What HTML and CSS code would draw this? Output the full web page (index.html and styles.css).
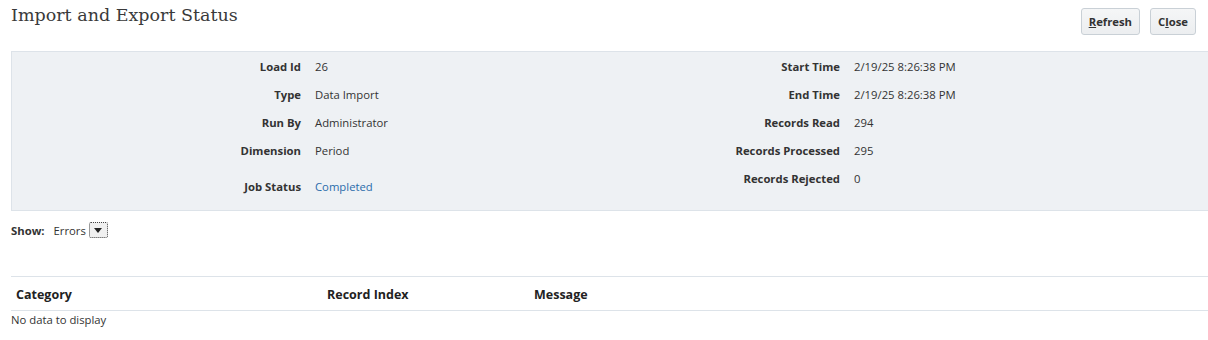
FILE: index.html
```html
<!DOCTYPE html>
<html lang="en">
<head>
    <meta charset="UTF-8">
    <title>Import and Export Status</title>
    <link rel="stylesheet" href="styles.css">
</head>
<body>
    <div class="page-header">
        <h1 class="page-title">Import and Export Status</h1>
        <div class="toolbar">
            <button class="btn"><u>R</u>efresh</button>
            <button class="btn">C<u>l</u>ose</button>
        </div>
    </div>

    <div class="summary">
        <div class="form-grid">
            <div class="label">Load Id</div>
            <div class="value">26</div>
            <div class="label">Start Time</div>
            <div class="value">2/19/25 8:26:38 PM</div>

            <div class="label">Type</div>
            <div class="value">Data Import</div>
            <div class="label">End Time</div>
            <div class="value">2/19/25 8:26:38 PM</div>

            <div class="label">Run By</div>
            <div class="value">Administrator</div>
            <div class="label">Records Read</div>
            <div class="value">294</div>

            <div class="label">Dimension</div>
            <div class="value">Period</div>
            <div class="label">Records Processed</div>
            <div class="value">295</div>

            <div class="label status-label">Job Status</div>
            <div class="value status-value"><a href="#" class="link">Completed</a></div>
            <div class="label">Records Rejected</div>
            <div class="value">0</div>
        </div>
    </div>

    <div class="filter">
        <span class="filter-label">Show:</span>
        <span class="filter-value">Errors</span>
        <span class="drop-btn">
            <svg width="8" height="5" viewBox="0 0 8 5"><path d="M0 0h8L4 5z" fill="#222"/></svg>
        </span>
    </div>

    <table class="results">
        <thead>
            <tr>
                <th class="col-cat">Category</th>
                <th class="col-idx">Record Index</th>
                <th>Message</th>
            </tr>
        </thead>
        <tbody>
            <tr>
                <td colspan="3" class="empty">No data to display</td>
            </tr>
        </tbody>
    </table>
</body>
</html>
```

FILE: styles.css
```css
* {
    margin: 0;
    padding: 0;
    box-sizing: border-box;
}

body {
    font-family: "Segoe UI", "Open Sans", sans-serif;
    font-size: 11.3px;
    color: #333;
    background: white;
    padding: 0 0 0 11px;
}

.page-header {
    display: flex;
    justify-content: space-between;
    align-items: flex-start;
    height: 51px;
}

.page-title {
    font-family: "DejaVu Serif", "Liberation Serif", serif;
    font-weight: normal;
    font-size: 17.5px;
    color: #3a3a3a;
    margin-top: 5px;
}

.toolbar {
    display: flex;
    gap: 10px;
    margin-top: 8px;
    margin-right: 12px;
}

.btn {
    font-family: "Segoe UI", "Open Sans", sans-serif;
    font-size: 11.3px;
    font-weight: bold;
    color: #333;
    background: linear-gradient(#f5f6f7, #eceef0);
    border: 1px solid #c9d0d6;
    border-radius: 3px;
    height: 27px;
    padding: 0 7px;
}

.summary {
    background: #eef1f4;
    border: 1px solid #dde3e9;
    border-right: none;
    height: 160px;
}

.form-grid {
    display: grid;
    grid-template-columns: 303px 239px 300px 1fr;
    grid-auto-rows: 28px;
    align-items: center;
}

.label {
    text-align: right;
    font-weight: bold;
    padding-right: 14px;
}

.value {
    white-space: nowrap;
}

.status-label,
.status-value {
    padding-top: 16px;
}

.link {
    color: #2a6cab;
    text-decoration: none;
}

.filter {
    display: flex;
    align-items: center;
    height: 38px;
}

.filter-label {
    font-weight: bold;
    margin-right: 9px;
}

.drop-btn {
    display: inline-flex;
    align-items: center;
    justify-content: center;
    width: 19px;
    height: 16px;
    margin-left: 3px;
    border: 1px dotted #444;
    border-radius: 2px;
    background: #f0f0f0;
}

.results {
    width: 100%;
    border-collapse: collapse;
    margin-top: 27px;
}

.results th {
    text-align: left;
    font-size: 12.5px;
    font-weight: bold;
    color: #222;
    height: 34px;
    padding-left: 5px;
    padding-top: 2px;
    border-top: 1px solid #dde3e9;
    border-bottom: 1px solid #dde3e9;
}

.col-cat {
    width: 311px;
}

.col-idx {
    width: 207px;
}

.empty {
    padding-top: 1px;
    color: #333;
}
```
